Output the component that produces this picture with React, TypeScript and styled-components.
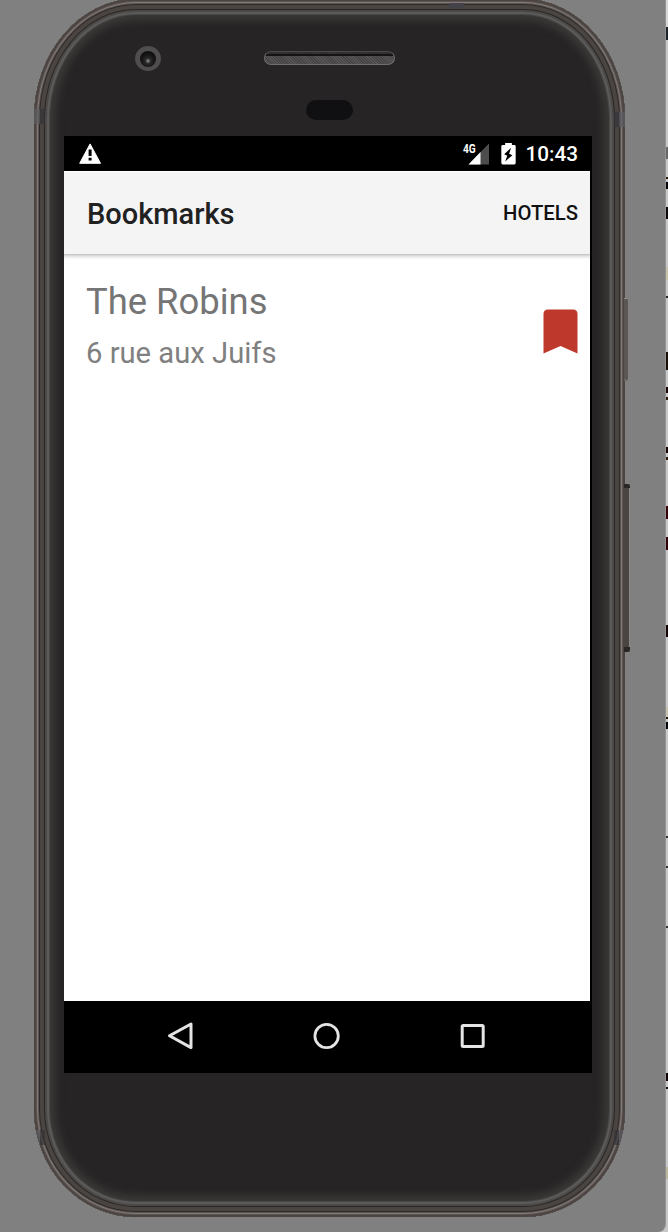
import React from "react";
import styled, { createGlobalStyle } from "styled-components";

const GlobalStyle = createGlobalStyle`
  html, body { margin: 0; padding: 0; }
  body { background: #c6c6c6; font-family: Roboto, "Liberation Sans", sans-serif; }
  * { box-sizing: border-box; }
`;

const Stage = styled.div`
  display: flex;
  position: relative;
  width: 668px;
  height: 1232px;
  overflow: hidden;
  background: #c6c6c6;
`;

const Desk = styled.main`
  flex: none;
  width: 666px;
  height: 1232px;
  padding-left: 34px;
  background: #808080;
  border-right: 1px solid #939393;
  border-bottom-right-radius: 8px;
`;

const Edge = styled.aside`
  flex: 1;
  height: 1232px;
  background: linear-gradient(#d8d8d8, #d8d8d8 20px, #c8c8c8 40px);
`;

const Mark = styled.div<{ $gap: number; $h: number; $c: string }>`
  margin-top: ${(p) => p.$gap}px;
  height: ${(p) => p.$h}px;
  background: ${(p) => p.$c};
`;

const Device = styled.div`
  position: relative;
  display: flex;
  flex-direction: column;
  width: 591px;
  height: 1218px;
  margin-top: -1px;
  padding: 1px 33px 0 30px;
  border-radius: 102px 102px 102px 102px / 120px 120px 108px 108px;
  background: #262424;
  box-shadow:
    inset 0 0 0 2px #4b4441,
    inset 0 0 0 3px #5d5552,
    inset 0 0 0 4px #81797a,
    inset 0 0 0 5px #5d5552,
    inset 0 0 0 6px #2e2a29,
    inset 0 0 0 10px #4b4541,
    inset 0 0 0 11px #292625,
    inset 0 0 0 13px #4c4a49,
    inset 0 0 0 15px #5c5b5a,
    inset 0 0 0 16px #484746,
    inset 0 0 10px 21px #3c3b3a;
`;

const Bands = styled.div`
  position: absolute;
  inset: 0;
  overflow: hidden;
  border-radius: 102px 102px 102px 102px / 120px 120px 108px 108px;
`;

const Band = styled.i<{ $side: "left" | "right"; $y: number }>`
  position: absolute;
  top: ${(p) => p.$y}px;
  ${(p) => p.$side}: 0;
  width: 11px;
  height: 15px;
  background: ${(p) =>
    p.$side === "left"
      ? "linear-gradient(90deg, #5c5d60 55%, #343335 55%)"
      : "linear-gradient(270deg, #5c5c63 55%, #343338 55%)"};
  opacity: 0.7;
`;

const TopBand = styled.i`
  position: absolute;
  top: 4px;
  left: 415px;
  width: 15px;
  height: 5px;
  background: #45434a;
`;

const SideKey = styled.i<{ $y: number; $h: number; $w: number; $long?: boolean }>`
  position: absolute;
  top: ${(p) => p.$y}px;
  left: 590px;
  width: ${(p) => p.$w}px;
  height: ${(p) => p.$h}px;
  background: ${(p) =>
    p.$long
      ? "linear-gradient(90deg, #4a4541 75%, #8b8885 75%)"
      : "#5b5553"};
  border-top: ${(p) => (p.$long ? "4px solid #292725" : "1px solid #908c89")};
  border-bottom: ${(p) => (p.$long ? "5px solid #292725" : "2px solid #686462")};
  border-radius: 0 2px 2px 0;
`;

const Forehead = styled.div`
  display: flex;
  flex: none;
  height: 136px;
  padding: 46px 0 0 71px;
`;

const Camera = styled.div`
  display: grid;
  place-items: center;
  width: 26px;
  height: 25px;
  border-radius: 50%;
  background: #4f4d4e;
`;

const Lens = styled.div`
  width: 16px;
  height: 16px;
  border-radius: 50%;
  background: radial-gradient(circle at 50% 62%, #777 0 1px, #2c2c2c 2.5px, #1c1c1c 5px, #101010 8px);
`;

const EarColumn = styled.div`
  display: flex;
  flex-direction: column;
  align-items: center;
  width: 131px;
  margin-left: 103px;
  padding-top: 5px;
`;

const Speaker = styled.div`
  width: 131px;
  height: 14px;
  border: 1px solid #716e6f;
  border-top-color: #4b494a;
  border-radius: 7px;
  background:
    repeating-linear-gradient(45deg, rgba(0, 0, 0, 0.18) 0 1px, transparent 1px 2px),
    linear-gradient(#373536 0 2px, #161616 2px 4px, #565454 4px);
`;

const Sensor = styled.div`
  width: 47px;
  height: 20px;
  margin-top: 35px;
  border-radius: 10px;
  background: #101012;
`;

const Screen = styled.div`
  position: relative;
  flex: none;
  width: 528px;
  height: 937px;
  background: #000;
`;

const StatusBar = styled.div`
  display: flex;
  align-items: center;
  height: 35px;
  padding: 0 14px;
  color: #fff;
`;

const StatusIcons = styled.div`
  display: flex;
  align-items: center;
  margin-left: auto;
`;

const Network = styled.div`
  position: relative;
  width: 27px;
  height: 23px;
  margin-right: 12px;
`;

const NetworkLabel = styled.span`
  position: absolute;
  top: 0;
  left: 1px;
  font-size: 13px;
  font-weight: 700;
  line-height: 13px;
  transform: scaleX(0.78);
  transform-origin: left;
`;

const Clock = styled.time`
  margin-left: 10px;
  padding-top: 2px;
  font-size: 20.7px;
  font-weight: 500;
  line-height: 33px;
`;

const AppBar = styled.header`
  position: relative;
  display: flex;
  align-items: center;
  justify-content: space-between;
  width: 526px;
  height: 83px;
  padding: 1px 12px 0 23px;
  background: #f4f4f4;
  border-top: 1px solid #fff;
  box-shadow: 0 1px 1px #c8c8c8, 0 2px 3px 1px rgba(0, 0, 0, 0.16);
  clip-path: inset(0 0 -8px 0);
`;

const Title = styled.h1`
  margin: 0;
  color: #212121;
  font-size: 29px;
  font-weight: 500;
`;

const Action = styled.a`
  padding-bottom: 2px;
  color: #111;
  font-size: 20.3px;
  font-weight: 500;
`;

const Content = styled.section`
  width: 526px;
  height: 747px;
  background: #fff;
`;

const Hotel = styled.article`
  display: flex;
  align-items: center;
  justify-content: space-between;
  height: 154px;
  padding: 0 12px 0 22px;
`;

const HotelText = styled.div`
  padding-bottom: 9px;
`;

const Name = styled.h2`
  margin: 0;
  color: #757575;
  font-size: 36.4px;
  font-weight: 400;
  line-height: 52px;
`;

const Address = styled.p`
  margin: 0;
  color: #808080;
  font-size: 29.2px;
  line-height: 50px;
`;

const NavBar = styled.nav`
  display: flex;
  align-items: center;
  justify-content: space-between;
  height: 72px;
  padding: 0 106px 2px 102px;
`;

const edgeMarks: [number, number, string][] = [
  [27, 13, "#1c2429"], [147, 12, "#666"], [177, 2, "#2a1708"], [182, 7, "#05050c"],
  [207, 12, "#0b0608"], [267, 13, "#c6c1a8"], [296, 2, "#222"], [352, 18, "#1a0e04"],
  [387, 6, "#1a0505"], [397, 3, "#2c1b0c"], [447, 6, "#1a0505"], [457, 3, "#2c1b0c"],
  [506, 13, "#350008"], [537, 13, "#300008"], [625, 12, "#150404"], [707, 9, "#c6c1a8"],
  [717, 2, "#2a1708"], [722, 7, "#05050c"], [836, 2, "#333"], [866, 2, "#333"],
  [926, 2, "#333"], [1073, 8, "#100504"], [1087, 2, "#151515"], [1167, 12, "#bbb79f"],
];

const Warning = () => (
  <svg width="24" height="21" viewBox="0 0 24 21">
    <path d="M12.1 .9 22.5 20.3H1.7Z" fill="#fff" stroke="#fff" strokeWidth="1" strokeLinejoin="round" />
    <path d="M10.6 6.5h3v6.5h-3zM10.6 14.8h3v2.6h-3z" fill="#000" />
  </svg>
);

const Signal = () => (
  <svg width="27" height="23" viewBox="0 0 27 23">
    <path d="M27 1.5V22.5H6.5Z" fill="#4d4d4d" />
    <path d="M18.5 10V22.5H6.5Z" fill="#fff" />
  </svg>
);

const Battery = () => (
  <svg width="15" height="22" viewBox="0 0 15 23">
    <path d="M4 0h7v2h2.5Q15 2 15 3.5V21Q15 22.5 13.5 22.5H1.5Q0 22.5 0 21V3.5Q0 2 1.5 2H4Z" fill="#fff" />
    <path d="M10.2 5 3 11.7l3.2 1.5L4 19.4l7.6-6.7-3.4-1.5Z" fill="#000" />
  </svg>
);

const Bookmark = () => (
  <svg width="35" height="45" viewBox="0 0 35 45">
    <path d="M5 .5h25Q34.5 .5 34.5 5V44.5L17.5 37 .5 44.5V5Q.5 .5 5 .5Z" fill="#be382c" />
  </svg>
);

const Back = () => (
  <svg width="28" height="30" viewBox="0 0 28 30">
    <path d="M25 3V26.6L3.5 14.8Z" fill="none" stroke="#e4e4e4" strokeWidth="3" strokeLinejoin="round" />
  </svg>
);

const Home = () => (
  <svg width="28" height="28" viewBox="0 0 28 28">
    <circle cx="13.6" cy="14" r="11.7" fill="none" stroke="#e4e4e4" strokeWidth="2.8" />
  </svg>
);

const Recents = () => (
  <svg width="26" height="26" viewBox="0 0 26 26">
    <rect x="2.2" y="2.5" width="21" height="21" rx="1" fill="none" stroke="#e4e4e4" strokeWidth="3" />
  </svg>
);

export default function App() {
  return (
    <Stage>
      <GlobalStyle />
      <Desk>
        <Device>
          <Bands>
            <Band $side="left" $y={110} />
            <Band $side="right" $y={113} />
            <Band $side="left" $y={1131} />
            <Band $side="right" $y={1131} />
            <TopBand />
          </Bands>
          <SideKey $y={299} $h={83} $w={4} />
          <SideKey $y={485} $h={168} $w={6} $long />
          <Forehead>
            <Camera><Lens /></Camera>
            <EarColumn>
              <Speaker />
              <Sensor />
            </EarColumn>
          </Forehead>
          <Screen>
            <StatusBar>
              <Warning />
              <StatusIcons>
                <Network>
                  <Signal />
                  <NetworkLabel>4G</NetworkLabel>
                </Network>
                <Battery />
                <Clock>10:43</Clock>
              </StatusIcons>
            </StatusBar>
            <AppBar>
              <Title>Bookmarks</Title>
              <Action>HOTELS</Action>
            </AppBar>
            <Content>
              <Hotel>
                <HotelText>
                  <Name>The Robins</Name>
                  <Address>6 rue aux Juifs</Address>
                </HotelText>
                <Bookmark />
              </Hotel>
            </Content>
            <NavBar>
              <Back />
              <Home />
              <Recents />
            </NavBar>
          </Screen>
        </Device>
      </Desk>
      <Edge>
        {edgeMarks.map(([y, h, c], i) => (
          <Mark
            key={y}
            $gap={i === 0 ? y : y - edgeMarks[i - 1][0] - edgeMarks[i - 1][1]}
            $h={h}
            $c={c}
          />
        ))}
      </Edge>
    </Stage>
  );
}
